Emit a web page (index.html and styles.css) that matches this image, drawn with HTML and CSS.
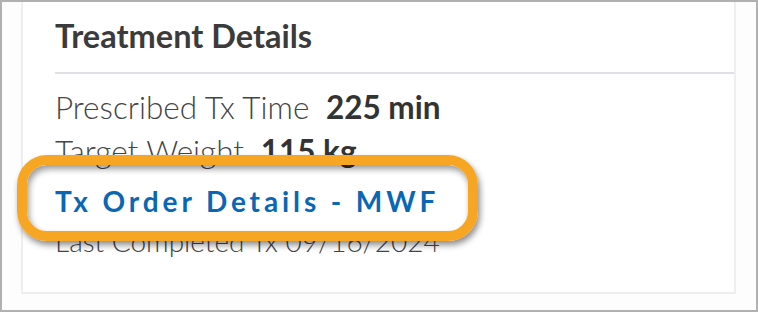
FILE: index.html
```html
<!DOCTYPE html>
<html lang="en">
<head>
<meta charset="utf-8">
<title>Treatment Details</title>
<link rel="stylesheet" href="styles.css">
</head>
<body>
<div class="frame">
  <section class="card">
    <h2 class="card-title">Treatment Details</h2>
    <hr class="divider">
    <div class="rows">
      <div class="row">Prescribed Tx Time <b class="val">225 min</b></div>
      <div class="row">Target Weight <b class="val">115 kg</b></div>
      <div class="row row-link"><a class="link" href="#">Tx Order Details - MWF</a></div>
      <div class="row row-last">Last Completed Tx 09/16/2024</div>
    </div>
    <div class="highlight"></div>
  </section>
</div>
</body>
</html>
```

FILE: styles.css
```css
html, body {
  margin: 0;
  padding: 0;
  background: #ffffff;
}

.frame {
  width: 758px;
  height: 312px;
  box-sizing: border-box;
  border: 2px solid #b1b1b1;
  background: #fdfdfd;
  display: flex;
  flex-direction: column;
  overflow: hidden;
  font-family: Lato, "Liberation Sans", sans-serif;
}

.card {
  position: relative;
  flex: 1;
  margin: 0 20px 16px 19px;
  border: 2px solid #eeeeee;
  border-top: none;
  background: #ffffff;
  padding-top: 14px;
}

.card-title {
  margin: 0 0 16px 32px;
  font-size: 32.5px;
  line-height: 40px;
  font-weight: 700;
  color: #3b3b3b;
}

.divider {
  margin: 0 0 11px 32px;
  border: none;
  height: 2px;
  background: #dfe2e5;
}

.rows {
  padding-left: 32px;
}

.row {
  font-size: 31.5px;
  line-height: 44px;
  font-weight: 300;
  color: #454545;
  white-space: nowrap;
}

.val {
  font-weight: 700;
  color: #333333;
  margin-left: 8px;
}

.row-link {
  font-size: 28px;
  line-height: 31px;
  padding-top: 13px;
}

.row-last {
  font-size: 28px;
  padding-top: 2px;
}

.link {
  color: #0a67b3;
  font-weight: 700;
  letter-spacing: 3.9px;
  text-decoration: none;
}

.highlight {
  position: absolute;
  left: -6px;
  top: 153px;
  width: 461px;
  height: 86px;
  box-sizing: border-box;
  border: 10px solid #f6a623;
  border-radius: 30px;
  box-shadow: 2px 4px 6px rgba(0, 0, 0, 0.45), inset 2px 4px 6px rgba(0, 0, 0, 0.4);
  pointer-events: none;
}
```
